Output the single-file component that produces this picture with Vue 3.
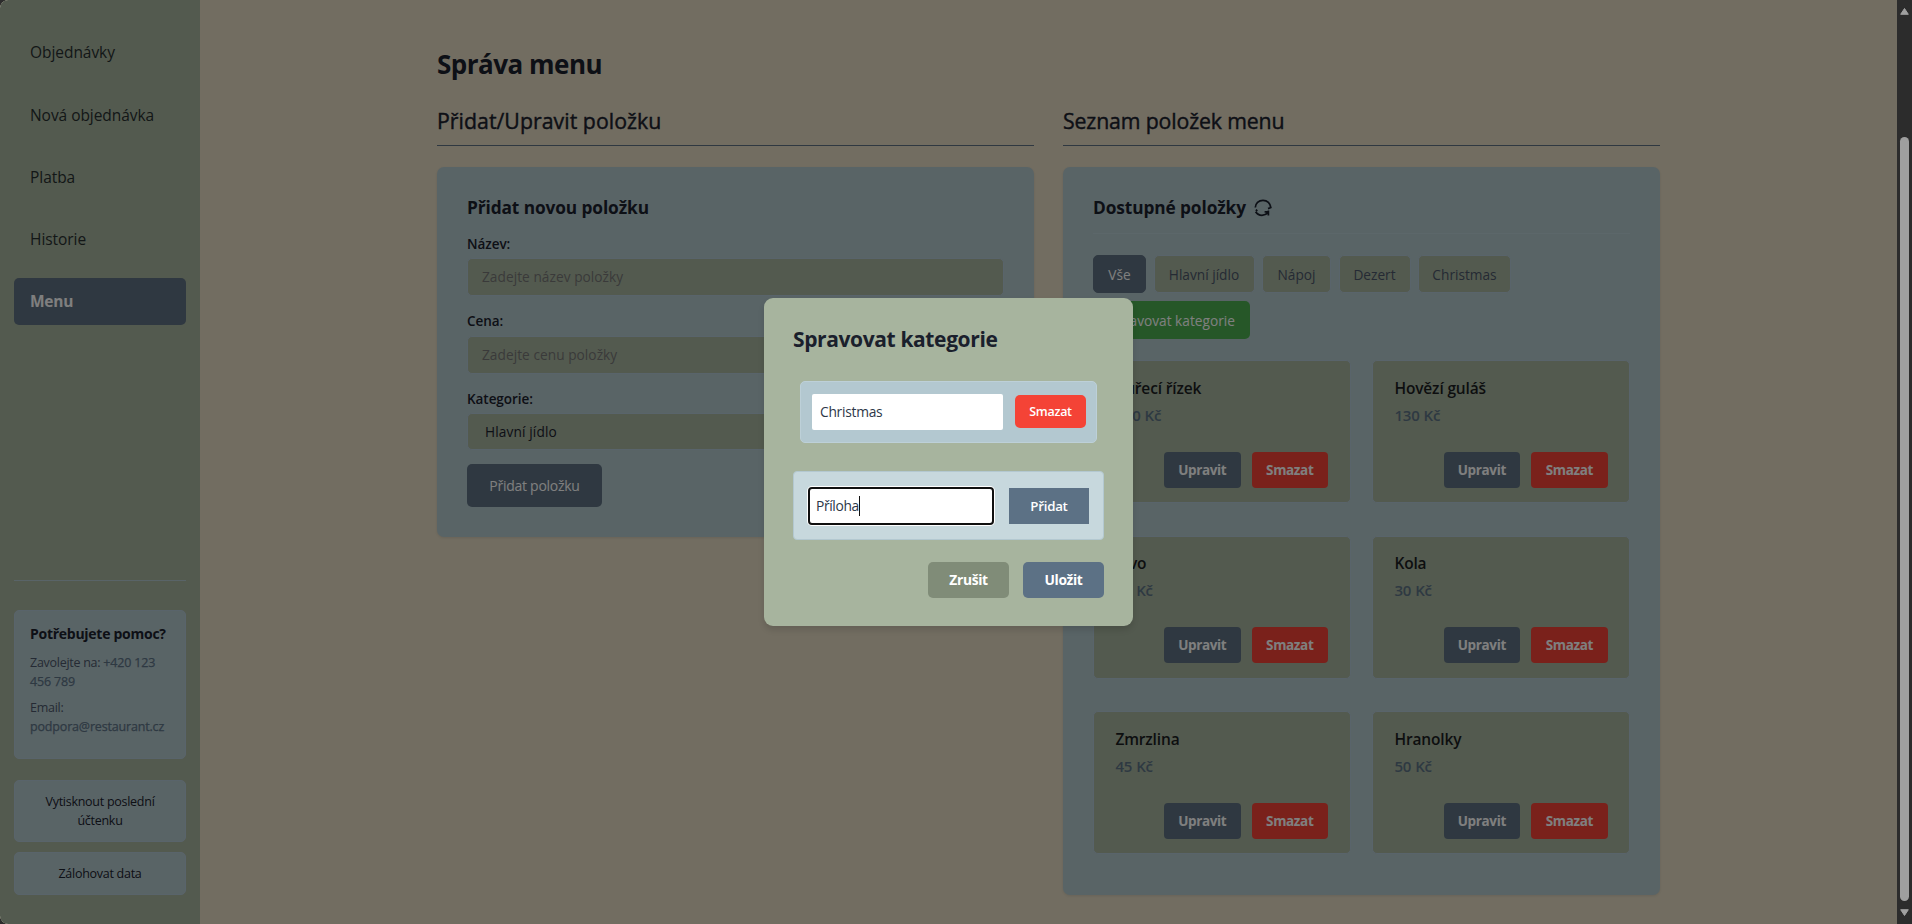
<script setup>
const nav = ['Objednávky', 'Nová objednávka', 'Platba', 'Historie', 'Menu']
const active = 'Menu'
const filters = ['Vše', 'Hlavní jídlo', 'Nápoj', 'Dezert', 'Christmas']
const widths = { 'Vše': 53, 'Hlavní jídlo': 101, 'Nápoj': 69, 'Dezert': 72, 'Christmas': 93 }
const items = [
  { name: 'Kuřecí řízek', price: '120 Kč' },
  { name: 'Hovězí guláš', price: '130 Kč' },
  { name: 'Pivo', price: '45 Kč' },
  { name: 'Kola', price: '30 Kč' },
  { name: 'Zmrzlina', price: '45 Kč' },
  { name: 'Hranolky', price: '50 Kč' },
]
</script>

<template>
  <div class="screen">
    <div class="page">
      <aside class="sidebar">
        <nav class="nav">
          <a v-for="n in nav" :key="n" class="nav-item" :class="{ active: n === active }">{{ n }}</a>
        </nav>
        <div class="side-bottom">
          <div class="help">
            <h4>Potřebujete pomoc?</h4>
            <p>Zavolejte na: <b>+420 123 456 789</b></p>
            <p>Email: <b>podpora@restaurant.cz</b></p>
          </div>
          <button class="side-btn tall">Vytisknout poslední účtenku</button>
          <button class="side-btn">Zálohovat data</button>
        </div>
      </aside>

      <main class="main">
        <h1>Správa menu</h1>
        <div class="columns">
          <section>
            <h2>Přidat/Upravit položku</h2>
            <div class="panel form">
              <h3>Přidat novou položku</h3>
              <label>Název:</label>
              <div class="field ph">Zadejte název položky</div>
              <label>Cena:</label>
              <div class="field ph second">Zadejte cenu položky</div>
              <label>Kategorie:</label>
              <div class="field select">Hlavní jídlo</div>
              <button class="submit">Přidat položku</button>
            </div>
          </section>

          <section>
            <h2 class="h2-list">Seznam položek menu</h2>
            <div class="panel list">
              <div class="list-head">
                <h3>Dostupné položky</h3>
                <svg class="refresh" width="18" height="18" viewBox="0 0 18 18" fill="none" stroke="#1a202c" stroke-width="1.7">
                  <path d="M1.300 8.600C1.400 4.400 4.600 1.400 9 1.400c4.400 0 7.400 3 7.600 6.800M17.600 8.300l-3.600 1.300M1.800 10.800l1.600 1.200M1.600 12.800c1.600 2.500 3.800 3.500 6.400 3.500 2.600 0 4.300-.9 6-2.700M10.600 12.800h4M14.400 11.600v5" />
                </svg>
              </div>
              <div class="filters">
                <button v-for="f in filters" :key="f" class="chip" :class="{ on: f === 'Vše' }" :style="{ width: widths[f] + 'px' }">{{ f }}</button>
                <button class="chip manage">Spravovat kategorie</button>
              </div>
              <div class="cards">
                <article v-for="i in items" :key="i.name" class="card">
                  <div class="name">{{ i.name }}</div>
                  <div class="price">{{ i.price }}</div>
                  <div class="actions">
                    <button class="edit">Upravit</button>
                    <button class="del">Smazat</button>
                  </div>
                </article>
              </div>
            </div>
          </section>
        </div>
      </main>
    </div>

    <div class="overlay">
      <div class="modal">
        <h2 class="modal-title">Spravovat kategorie</h2>
        <div class="cat-row">
          <div class="cat-input">Christmas</div>
          <button class="cat-del">Smazat</button>
        </div>
        <div class="add-row">
          <div class="add-input">Příloha<i class="caret"></i></div>
          <button class="add-btn">Přidat</button>
        </div>
        <div class="modal-actions">
          <button class="cancel">Zrušit</button>
          <button class="save">Uložit</button>
        </div>
      </div>
    </div>

    <div class="scrollbar">
      <svg width="9" height="7" viewBox="0 0 9 7"><path d="M4.500 0.500 8.300 6.300H.7z" fill="#a0a0a0" stroke="#a0a0a0" stroke-linejoin="round" /></svg>
      <div class="thumb"></div>
      <svg width="9" height="7" viewBox="0 0 9 7"><path d="M4.500 6.500 8.300 .7H.7z" fill="#a0a0a0" stroke="#a0a0a0" stroke-linejoin="round" /></svg>
    </div>
  </div>
</template>

<style>
body { background: #2c2c2c; }
</style>

<style scoped>
* { box-sizing: border-box; }
h1, h2, h3, h4, p { margin: 0; }
button { font: inherit; letter-spacing: inherit; border: 0; padding: 0; color: #fff; white-space: nowrap; }
.screen {
  position: relative; width: 1912px; height: 924px; overflow: hidden; display: flex;
  background: #2c2c2c; border-radius: 8px; color: #1a202c;
  font-family: "Open Sans", "Noto Sans", sans-serif; font-size: 13.5px; letter-spacing: -0.27px;
}
.page { width: 1897px; height: 924px; display: flex; background: #e5dbc3; border-radius: 8px 0 0 8px; overflow: hidden; }

.sidebar { width: 200px; padding: 29.4px 14px 29px; background: #a7b49e; display: flex; flex-direction: column; justify-content: space-between; }
.nav { display: flex; flex-direction: column; gap: 15.2px; }
.nav-item { height: 47px; line-height: 46px; padding-left: 16px; border-radius: 5px; font-size: 15.5px; letter-spacing: -0.05px; color: #262f2f; }
.nav-item.active { background: #5e7182; color: #fff; font-weight: 700; letter-spacing: -0.27px; }
.side-bottom { border-top: 1px solid #b3c8d0; padding-top: 29px; }
.help { height: 149px; border-radius: 5px; background: #b3c8cd; border: 1px solid #b3c8d6; padding: 13px 15px; }
.help h4 { font-size: 14px; line-height: 20px; font-weight: 700; white-space: nowrap; }
.help p { font-size: 12.5px; line-height: 19px; margin-top: 9px; color: #4a5568; }
.help p + p { margin-top: 7px; }
.help b { font-weight: 400; letter-spacing: -0.17px; color: #5c7285; -webkit-text-stroke: 0.25px #5c7285; }
.side-btn { display: block; width: 172px; height: 43px; margin-top: 10px; border: 1px solid #b3c8d6; border-radius: 5px; background: #b3c8cd; color: #1a202c; font-size: 12.5px; line-height: 19px; white-space: normal; padding: 0 25px; }
.side-btn.tall { height: 62px; margin-top: 21px; }

.main { flex: 1; padding: 44px 237px 0; }
h1 { font-size: 26px; line-height: 40px; font-weight: 700; letter-spacing: -0.5px; }
.columns { display: grid; grid-template-columns: 597px 597px; gap: 29px; align-items: start; margin-top: 16px; }
h2 { height: 46px; line-height: 42px; font-size: 21.3px; font-weight: 400; letter-spacing: 0.03px; -webkit-text-stroke: 0.4px #1a202c; border-bottom: 1px solid #5e7182; }
.h2-list { letter-spacing: -0.15px; }
.panel { margin-top: 21px; padding: 29px 30px; border-radius: 7px; background: #b3c8cd; box-shadow: 0 1px 3px rgba(0,0,0,.1); }
.form { height: 370px; letter-spacing: -0.05px; }
.list { height: 728px; }
h3 { font-size: 17.3px; line-height: 24px; font-weight: 700; letter-spacing: -0.1px; }
label { display: block; font-size: 13.5px; line-height: 18px; font-weight: 600; margin-top: 15px; }
.field { height: 38px; margin-top: 5px; border: 1px solid #b3c8d6; border-radius: 5px; background: #a7b49e; padding: 0 14px; line-height: 36px; font-size: 13.7px; letter-spacing: 0.04px; }
.field.ph { color: #757575; margin-bottom: 16px; }
.field.second { margin-top: 6px; }
.select { height: 37px; line-height: 36px; padding-left: 17px; letter-spacing: 0.12px; }
.submit { width: 135px; height: 43px; margin-top: 14px; border-radius: 5px; background: #5e7182; font-size: 14px; letter-spacing: -0.27px; }

.list-head { display: flex; gap: 8px; align-items: center; height: 38px; padding-bottom: 14px; border-bottom: 1px solid #b9ced4; }
.filters { display: flex; flex-wrap: wrap; gap: 8px 7.5px; margin-top: 21px; align-items: center; letter-spacing: 0; }
.chip { height: 38px; padding-top: 1px; border-radius: 5px; border: 1px solid #b3c8d6; background: #a7b49e; color: #4a5568; font-size: 13.7px; }
.chip.on { background: #5e7182; border-color: #5e7182; color: #fff; }
.manage { width: 157px; padding-top: 0; background: #4caf50; border: 0; color: #fff; }
.cards { display: grid; grid-template-columns: 258px 258px; column-gap: 21px; row-gap: 32.5px; margin-top: 21px; }
.card { height: 143px; border: 1px solid #b3c8d6; border-radius: 5px; background: #a7b49e; padding: 16px 22px 0 21.4px; display: flex; flex-direction: column; }
.name { font-size: 15.5px; line-height: 22px; font-weight: 600; letter-spacing: -0.15px; color: #1a1d1e; }
.price { font-size: 15px; line-height: 22px; font-weight: 600; letter-spacing: -0.1px; color: #5c7285; margin-top: 5px; }
.actions { display: flex; justify-content: flex-end; gap: 11px; margin-top: 26px; }
.card:nth-child(even) .actions { margin-right: -0.6px; }
.card:nth-child(3) .name, .card:nth-child(4) .name { margin-top: -0.6px; }
.card:nth-child(3) .actions, .card:nth-child(4) .actions { margin-top: 26px; }
.actions button { width: 76.5px; height: 36px; border-radius: 4px; font-size: 13.5px; font-weight: 700; letter-spacing: -0.35px; }
.edit { background: #5e7182; }
.del { background: #f44336; }

.overlay { position: absolute; inset: 0 15px 0 0; border-radius: 8px 0 0 8px; background: rgba(0,0,0,.5); display: flex; align-items: center; justify-content: center; }
.modal { width: 369px; height: 328px; padding: 28px 29px; border-radius: 9px; background: #a7b49e; box-shadow: 0 4px 6px rgba(0,0,0,.12); }
.modal-title { height: 26px; line-height: 26px; border: 0; font-size: 21px; font-weight: 700; letter-spacing: -0.38px; -webkit-text-stroke: 0; }
.cat-row { margin: 29px 7px 0; width: 297px; height: 62px; padding: 0 11px; border: 1px solid #bdd0d8; border-radius: 5px; background: #b3c8d0; display: flex; align-items: center; justify-content: space-between; }
.cat-input { width: 191px; height: 36px; line-height: 36px; padding-left: 8px; background: #fff; border-radius: 2px; font-size: 13.8px; color: #2d3748; }
.cat-del { width: 71px; height: 33px; margin: 0 -1px 1px 0; border-radius: 5px; background: #f44336; font-size: 12.5px; font-weight: 600; }
.add-row { margin-top: 28px; width: 311px; height: 69px; padding: 0 14px; border: 1px solid #b3c8d0; border-radius: 4px; background: #c7d8dd; display: flex; align-items: center; justify-content: space-between; }
.add-input { width: 186px; height: 38px; line-height: 34px; padding-left: 6px; border: 2px solid #101010; border-radius: 4px; background: #fff; box-shadow: 0 0 0 1px #fff; font-size: 13.8px; letter-spacing: -0.35px; color: #2d3748; display: flex; align-items: center; }
.caret { width: 1px; height: 20px; background: #111; }
.add-btn { width: 80px; height: 36px; background: #5c7185; font-weight: 600; font-size: 13.3px; }
.modal-actions { display: flex; justify-content: flex-end; gap: 14px; margin-top: 22px; }
.modal-actions button { width: 81px; height: 36px; padding-bottom: 2px; border-radius: 5px; font-size: 13.8px; font-weight: 700; letter-spacing: -0.35px; }
.cancel { background: #808c78; }
.save { background: #5c7185; }

.scrollbar { width: 15px; height: 924px; padding: 8px 3px; display: flex; flex-direction: column; justify-content: space-between; align-items: center; }
.thumb { width: 9px; height: 764px; margin-top: 114px; border-radius: 5px; background: #9f9f9f; }
</style>
